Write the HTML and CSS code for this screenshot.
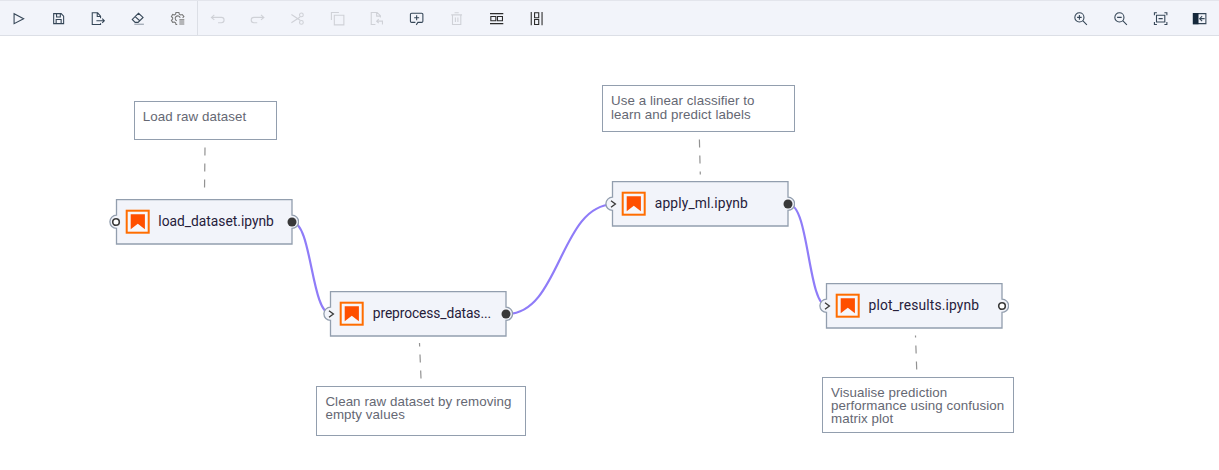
FILE: index.html
```
<!DOCTYPE html>
<html lang="en">
<head>
<meta charset="utf-8">
<title>Pipeline editor</title>
<link rel="stylesheet" href="styles.css">
</head>
<body>
<svg class="defs" width="0" height="0">
  <defs>
    <symbol id="frame" viewBox="0 0 190 46">
      <path class="frame-line" d="M7.500 .7H183V16.200A6.600 6.600 0 0 1 183 29.400V45H7.500V29.400A6.600 6.600 0 0 1 7.500 16.200Z"/>
      <rect class="logo-box" x="17.700" y="11.700" width="22" height="22"/>
      <path class="logo-mark" d="M21.700 15.300H35.900V30.200L28.800 24.800L21.700 30.200Z"/>
    </symbol>
    <symbol id="open" viewBox="0 0 10 10"><circle class="port-open" cx="5" cy="5" r="3.300"/></symbol>
    <symbol id="full" viewBox="0 0 10 10"><circle class="port-full" cx="5" cy="5" r="4.500"/></symbol>
    <symbol id="arrow" viewBox="0 0 10 10"><path class="port-arrow" d="M3 1.800L7.400 5L3 8.200"/></symbol>
  </defs>
</svg>
<header class="toolbar">
  <div class="group first">
    <button class="tool"><svg viewBox="0 0 32 32"><path d="M5 4V28L28 16Z"/></svg></button>
    <button class="tool"><svg viewBox="0 0 32 32"><path d="M4 4H22L28 10V28H4ZM11 4V12H20V4M10 28V18H22V28"/></svg></button>
    <button class="tool"><svg viewBox="0 0 32 32"><path d="M23 15V10L16 2H3V30H23V27M15 2V11H23M13 21H32M27 16L32 21L27 26"/></svg></button>
    <button class="tool"><svg viewBox="0 0 32 32"><path d="M18 3L29 13L17 25H10L3 18ZM10 11L21 21"/><path class="soft" d="M8 29.500H31"/></svg></button>
    <button class="tool grey"><svg viewBox="0 0 32 32"><path d="M15 30H12L11 26L8 24L4 25L1 20L4 17V14L1 11L4 6L8 7L11 5L12 1H19L20 5L23 7L27 6L31 11L28 14M14 21A6 6 0 1 1 22 14M20 19H32M20 24H32M20 29H32"/></svg></button>
  </div>
  <div class="group">
    <button class="tool off"><svg viewBox="0 0 32 32"><path d="M8 7L1 13L8 19M1 13H25A6 6 0 0 1 25 26H17"/></svg></button>
    <button class="tool off"><svg viewBox="0 0 32 32"><path d="M24 7L31 13L24 19M31 13H7A6 6 0 0 0 7 26H15"/></svg></button>
    <button class="tool off"><svg viewBox="0 0 32 32"><path d="M1 6L22 20M1 26L22 12"/><circle cx="25" cy="7" r="4.500"/><circle cx="25" cy="25" r="4.500"/></svg></button>
    <button class="tool off"><svg viewBox="0 0 32 32"><path d="M8 8H31V31H8ZM1 19V1H19"/></svg></button>
    <button class="tool off"><svg viewBox="0 0 32 32"><path d="M13 30H3V1H17L25 9V13M16 1V10H25M21 17L16 22L21 27M16 22H30V30"/></svg></button>
    <button class="tool"><svg viewBox="0 0 32 32"><path d="M15 31L19 25H28A3 3 0 0 0 31 22V6A3 3 0 0 0 28 3H4A3 3 0 0 0 1 6V22A3 3 0 0 0 4 25H13M16 8V20M10 14H22"/></svg></button>
    <button class="tool off"><svg viewBox="0 0 32 32"><path d="M3 7H29M6 7V30H26V7M11 2H21M13 13V24M19 13V24"/></svg></button>
    <button class="tool dark"><svg viewBox="0 0 32 32"><path d="M0 4H32M0 28H32M2 11H14V21H2ZM18 11H30V21H18Z"/></svg></button>
    <button class="tool dark"><svg viewBox="0 0 32 32"><path d="M3 0V32M29 0V32M11 2H21V14H11ZM11 18H21V30H11Z"/></svg></button>
  </div>
  <div class="group right">
    <button class="tool"><svg viewBox="0 0 32 32"><circle cx="13" cy="13" r="11"/><path d="M21 21L31 31M13 7.500V18.500M7.500 13H18.500"/></svg></button>
    <button class="tool"><svg viewBox="0 0 32 32"><circle cx="13" cy="13" r="11"/><path d="M21 21L31 31M7.500 13H18.500"/></svg></button>
    <button class="tool"><svg viewBox="0 0 32 32"><path d="M1 8V2H7M25 2H31V8M31 24V30H25M7 30H1V24M6 8H26V24H6ZM11 16H21"/></svg></button>
    <button class="tool"><svg viewBox="0 0 32 32"><path d="M1 4H31V28H1ZM28 16H17M22 10L16 16L22 22"/><path class="solid" d="M1 4H12V28H1Z"/></svg></button>
  </div>
</header>
<main class="canvas">
  <svg class="wires" width="1219" height="434" viewBox="0 36 1219 434">
    <path class="wire" d="M292 222C312 222 311 314 331 314"/>
    <path class="wire" d="M507 314C560 314 560 204.500 613 204.500"/>
    <path class="wire" d="M789 204.500C809 204.500 808 306 827 306"/>
    <path class="link" d="M205 147.500L204.500 191"/>
    <path class="link" d="M421 378.500L419.500 343"/>
    <path class="link" d="M699.400 139.500L700.300 174.500"/>
    <path class="link" d="M916.700 369.500L915.500 335.500"/>
  </svg>

  <div class="comment c1">Load raw dataset</div>
  <div class="comment c2">Clean raw dataset by removing<br>empty values</div>
  <div class="comment c3">Use a linear classifier to<br>learn and predict labels</div>
  <div class="comment c4">Visualise prediction<br>performance using confusion<br>matrix plot</div>

  <div class="node n1"><svg class="frame"><use href="#frame"/></svg><svg class="port in"><use href="#open"/></svg><svg class="port out"><use href="#full"/></svg><span class="label">load_dataset.ipynb</span></div>
  <div class="node n2"><svg class="frame"><use href="#frame"/></svg><svg class="port in"><use href="#arrow"/></svg><svg class="port out"><use href="#full"/></svg><span class="label">preprocess_datas...</span></div>
  <div class="node n3"><svg class="frame"><use href="#frame"/></svg><svg class="port in"><use href="#arrow"/></svg><svg class="port out"><use href="#full"/></svg><span class="label">apply_ml.ipynb</span></div>
  <div class="node n4"><svg class="frame"><use href="#frame"/></svg><svg class="port in"><use href="#arrow"/></svg><svg class="port out"><use href="#open"/></svg><span class="label">plot_results.ipynb</span></div>
</main>
</body>
</html>
```

FILE: styles.css
```
* { box-sizing: border-box; }
body { margin: 0; width: 1219px; height: 470px; overflow: hidden; background: #fff; font-family: "Liberation Sans", Arial, sans-serif; }
.defs { position: absolute; }
.toolbar { display: flex; height: 36px; background: #f2f4fa; border-top: 1px solid #e3e5ec; border-bottom: 1px solid #dcdfe6; }
.group { display: flex; }
.first { width: 198px; border-right: 1px solid #dcdfe6; justify-content: flex-end; }
.right { margin-left: auto; margin-right: -1px; }
.tool { flex: none; width: 39.800px; height: 34px; padding: 1px 0 0; border: 0; background: none; display: flex; align-items: center; justify-content: center; color: #354657; }
.tool svg { width: 13.300px; height: 13.300px; overflow: visible; fill: none; stroke: currentColor; stroke-width: 2.600; }
.first .tool svg { margin-left: 1px; }
.grey { color: #777; }
.off { color: #cfd1d7; }
.dark { color: #2b2b2b; }
.tool .soft { stroke: #9da6b1; stroke-width: 3; }
.tool .solid { fill: #15283b; stroke: #15283b; }

.canvas { position: relative; height: 434px; }
.wires { position: absolute; left: 0; top: 0; fill: none; }
.wire { stroke: #8f7cf8; stroke-width: 2.200; }
.link { stroke: #929292; stroke-width: 1.200; stroke-dasharray: 8 8; }

.comment { position: absolute; padding: 9px 9px; background: #fff; color: #656873; outline: 1.300px solid #929eae; outline-offset: -1px; font-size: 13.330px; letter-spacing: .080px; line-height: 13.300px; white-space: nowrap; }
.c1 { left: 133.700px; top: 65px; width: 143.500px; height: 39px; }
.c2 { left: 316.400px; top: 350px; width: 210px; height: 50px; }
.c3 { left: 602px; top: 49.400px; width: 192.500px; height: 46.500px; }
.c4 { left: 822px; top: 340.700px; width: 192px; height: 56.500px; }

.node { position: absolute; width: 190px; height: 46px; padding-left: 49.300px; display: flex; align-items: center; }
.n1 { left: 109px; top: 163px; }
.n2 { left: 323.500px; top: 255px; }
.n3 { left: 605.500px; top: 145.400px; }
.n4 { left: 819.300px; top: 247.400px; }
.frame { position: absolute; left: 0; top: 0; width: 190px; height: 46px; }
.n2 .frame, .n3 .frame { left: -.500px; }
.n3 .frame, .n4 .frame { top: -.400px; }
.frame-line { fill: #f2f4fa; stroke: #929eae; stroke-width: 1.300; }
.logo-box { fill: #f6f6fa; stroke: #ff6d00; stroke-width: 2; }
.logo-mark { fill: #ff4f00; }
.port { position: absolute; top: 18px; width: 10px; height: 10px; }
.in { left: 2.400px; }
.out { left: 178px; }
.n2 .out, .n3 .out { left: 177.400px; }
.n3 .port, .n4 .port { top: 17.500px; }
.port-open { fill: #fff; stroke: #393939; stroke-width: 1.600; }
.port-full { fill: #393939; }
.port-arrow { fill: none; stroke: #393939; stroke-width: 1.300; }
.label { position: relative; top: -1px; color: #26203a; font: 13.800px Roboto, sans-serif; letter-spacing: .150px; white-space: nowrap; }
.n1 .label { letter-spacing: 0; }
.n2 .label { letter-spacing: -.100px; }
```
